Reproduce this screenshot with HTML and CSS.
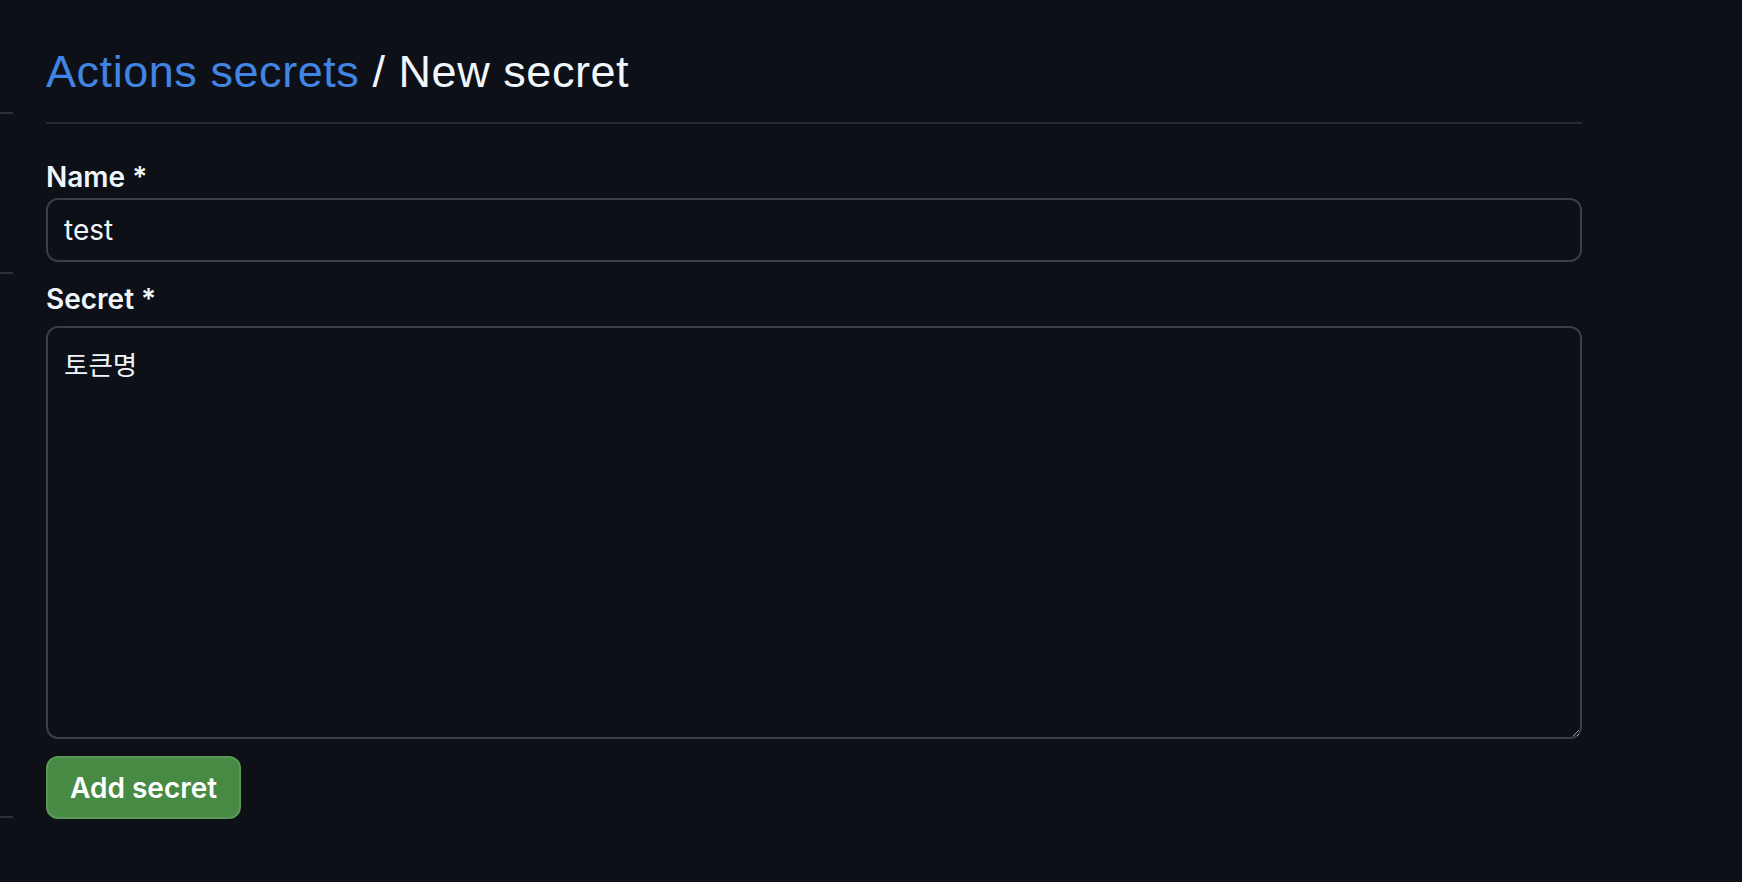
FILE: index.html
```html
<!DOCTYPE html>
<html lang="ko">
<head>
<meta charset="utf-8">
<title>New secret</title>
<link rel="stylesheet" href="styles.css">
</head>
<body>
<div class="layout">
  <nav class="sidebar">
    <div class="side-item side-a"></div>
    <div class="side-item side-b"></div>
    <div class="side-item side-c"></div>
  </nav>
  <main class="content">
    <div class="subhead">
      <h2 class="subhead-heading"><a class="crumb" href="#">Actions secrets</a> / New secret</h2>
    </div>
    <form class="secret-form">
      <div class="form-group">
        <label class="form-label" for="secret_name">Name *</label>
        <input id="secret_name" class="form-control input" type="text" value="test">
      </div>
      <div class="form-group form-group-secret">
        <label class="form-label label-secret" for="secret_value">Secret *</label>
        <textarea id="secret_value" class="form-control textarea">토큰명</textarea>
      </div>
      <button type="button" class="btn-primary">Add secret</button>
    </form>
  </main>
</div>
</body>
</html>
```
FILE: styles.css
```css
html, body {
  margin: 0;
  padding: 0;
  background: #0d1117;
}

body {
  width: 1742px;
  height: 882px;
  overflow: hidden;
  font-family: Inter, "Noto Sans CJK KR", sans-serif;
  color: #f0f6fc;
}

.layout {
  display: flex;
  align-items: flex-start;
}

.sidebar {
  width: 13px;
  flex: 0 0 13px;
  display: flex;
  flex-direction: column;
}

.side-item {
  border-bottom: 2px solid #2b3036;
}

.side-a { height: 112px; }
.side-b { height: 158px; }
.side-c { height: 542px; }

.content {
  margin-left: 33px;
  width: 1536px;
  padding-top: 44px;
}

.subhead {
  padding-bottom: 22px;
  border-bottom: 2px solid #262b31;
}

.subhead-heading {
  margin: 0;
  font-family: "Liberation Sans", Arial, sans-serif;
  font-weight: 400;
  font-size: 45px;
  line-height: 56px;
  letter-spacing: 0.55px;
  color: #f0f6fc;
}

.crumb {
  color: #4184e4;
  text-decoration: none;
}

.secret-form {
  margin-top: 32px;
}

.form-label {
  display: block;
  font-weight: 600;
  font-size: 28px;
  line-height: 42px;
  color: #f0f6fc;
}

.form-group-secret {
  margin-top: 16px;
}

.label-secret {
  margin-bottom: 6px;
}

.form-control {
  display: block;
  box-sizing: border-box;
  width: 100%;
  margin: 0;
  background: #0d1117;
  color: #f0f6fc;
  border: 2px solid #393e45;
  border-radius: 12px;
  font-family: Inter, "Noto Sans CJK KR", sans-serif;
  font-size: 28px;
  outline: none;
  color-scheme: dark;
}

.input {
  height: 64px;
  padding: 0 16px;
}

.textarea {
  height: 413px;
  padding: 17px 16px;
  font-size: 26.5px;
  line-height: 40px;
  resize: vertical;
}

.btn-primary {
  display: inline-block;
  margin-top: 17px;
  height: 63px;
  padding: 0 22px;
  background: #468a43;
  color: #ffffff;
  border: 2px solid #5a9857;
  border-radius: 12px;
  font-family: Inter, sans-serif;
  font-weight: 600;
  font-size: 28px;
  cursor: pointer;
}
```
